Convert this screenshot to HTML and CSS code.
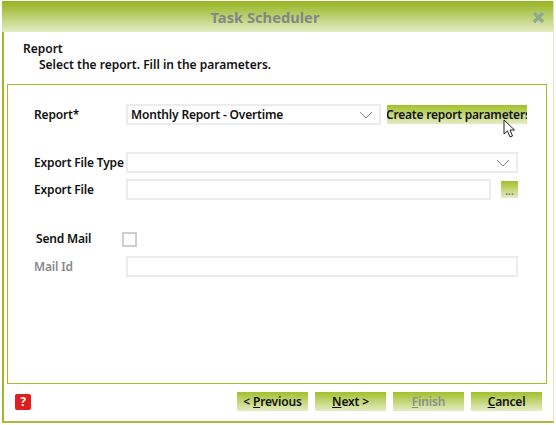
FILE: index.html
```html
<!DOCTYPE html>
<html lang="en">
<head>
  <meta charset="UTF-8">
  <title>Task Scheduler</title>
  <link rel="stylesheet" href="styles.css">
</head>
<body>

  <div class="window">
    <div class="titlebar">
      <span class="title">Task Scheduler</span>
      <svg class="close" width="15" height="15" viewBox="0 0 15 15">
        <path d="M3 3 L12 12 M12 3 L3 12" stroke="#8fa88f" stroke-width="3.2" fill="none"/>
      </svg>
    </div>

    <div class="head">
      <div class="head-title">Report</div>
      <div class="head-sub">Select the report. Fill in the parameters.</div>
    </div>

    <div class="panel">
      <div class="row row-report">
        <label class="label">Report*</label>
        <div class="field select select-report">
          <span>Monthly Report - Overtime</span>
          <svg class="chevron" width="14" height="8" viewBox="0 0 14 8"><path d="M1 1 L7 7 L13 1" stroke="#888" fill="none"/></svg>
        </div>
        <button class="btn btn-create">Create report parameters</button>
      </div>

      <div class="row row-type">
        <label class="label">Export File Type</label>
        <div class="field select select-wide">
          <span></span>
          <svg class="chevron" width="14" height="8" viewBox="0 0 14 8"><path d="M1 1 L7 7 L13 1" stroke="#888" fill="none"/></svg>
        </div>
      </div>

      <div class="row row-file">
        <label class="label">Export File</label>
        <div class="field field-file"></div>
        <button class="btn btn-dots">...</button>
      </div>

      <div class="row row-mail">
        <label class="label label-mail">Send Mail</label>
        <span class="checkbox"></span>
      </div>

      <div class="row row-id">
        <label class="label label-off">Mail Id</label>
        <div class="field select-wide"></div>
      </div>
    </div>

    <div class="footer">
      <span class="help">?</span>
      <div class="actions">
        <button class="btn btn-nav">&lt; <u>P</u>revious</button>
        <button class="btn btn-nav"><u>N</u>ext &gt;</button>
        <button class="btn btn-nav btn-off"><u>F</u>inish</button>
        <button class="btn btn-nav"><u>C</u>ancel</button>
      </div>
    </div>
  </div>

  <svg class="cursor" width="13" height="20" viewBox="0 0 13 20">
    <path d="M1 1 L1 15 L4.5 12 L7 18 L9.5 17 L7 11 L11.5 11 Z" fill="#fff" stroke="#222"/>
  </svg>

</body>
</html>
```

FILE: styles.css
```css
html, body {
  margin: 0;
  padding: 0;
  background: #fff;
}

body {
  width: 556px;
  height: 425px;
  overflow: hidden;
  position: relative;
  font-family: "Noto Sans", sans-serif;
  font-size: 12px;
  font-weight: 600;
  letter-spacing: -0.18px;
  color: #111;
}

.window {
  box-sizing: border-box;
  width: 552px;
  height: 422px;
  margin: 1px 0 0 2px;
  border-left: 2px solid #9ab82a;
  border-bottom: 2px solid #a4bd3c;
  border-right: 1px solid #dfe8bb;
  display: flex;
  flex-direction: column;
}

.titlebar {
  height: 31px;
  margin-left: -2px;
  padding-right: 25px;
  background: linear-gradient(#94b31d, #e4ecc4);
  display: flex;
  align-items: center;
  justify-content: center;
  position: relative;
  flex: none;
}

.title {
  color: #858585;
  font-size: 14.7px;
  font-weight: 700;
  letter-spacing: 0;
}

.close {
  position: absolute;
  right: 7px;
  top: 9px;
}

.head {
  height: 52px;
  flex: none;
  box-sizing: border-box;
  padding: 9px 0 0 19px;
  line-height: 16px;
  letter-spacing: 0;
}

.head-sub {
  padding-left: 16px;
}

.panel {
  box-sizing: border-box;
  height: 300px;
  width: 540px;
  margin-left: 3px;
  border: 1px solid #a4bf22;
  flex: none;
}

.row {
  display: flex;
  align-items: center;
  line-height: 16px;
}

.row-report {
  margin-top: 19px;
}

.row-type {
  margin-top: 27px;
}

.row-file {
  margin-top: 6px;
}

.row-mail {
  margin-top: 31px;
}

.row-id {
  margin-top: 9px;
}

.label {
  box-sizing: border-box;
  width: 118px;
  flex: none;
  padding-left: 26px;
  white-space: nowrap;
}

.label-mail {
  width: 114px;
  padding-left: 28px;
}

.label-off {
  color: #8a8a8a;
}

.field {
  box-sizing: border-box;
  height: 21px;
  border: 2px solid #ececec;
  background: #fff;
  flex: none;
}

.select {
  display: flex;
  align-items: center;
  justify-content: space-between;
  padding: 0 6px 0 3px;
}

.select-report {
  width: 255px;
}

.select-wide {
  width: 392px;
}

.field-file {
  width: 365px;
}

.chevron {
  flex: none;
}

.btn {
  box-sizing: border-box;
  border: none;
  padding: 0;
  background: linear-gradient(#a2bf2a, #e4ecc4);
  color: #111;
  font-family: inherit;
  font-size: 12px;
  font-weight: 600;
  letter-spacing: -0.18px;
  height: 19px;
  line-height: 19px;
  text-align: center;
  white-space: nowrap;
  overflow: hidden;
  flex: none;
}

.btn-create {
  width: 140px;
  margin-left: 6px;
  text-align: left;
  text-indent: -1px;
  letter-spacing: -0.22px;
}

.btn-dots {
  width: 17px;
  height: 17px;
  line-height: 19px;
  margin-left: 10px;
  color: #777;
  font-size: 11px;
}

.checkbox {
  box-sizing: border-box;
  width: 15px;
  height: 15px;
  border: 2px solid #cfcfcf;
  background: #fff;
}

.footer {
  flex: 1;
  display: flex;
  align-items: flex-start;
  justify-content: space-between;
  padding: 8px 11px 0 11px;
}

.help {
  width: 16px;
  height: 16px;
  margin-top: 2px;
  border-radius: 2px;
  background: #e31c1c;
  color: #fff;
  font-size: 12px;
  font-weight: 700;
  line-height: 16px;
  text-align: center;
}

.actions {
  display: flex;
  gap: 7px;
}

.btn-nav {
  width: 71px;
}

.btn-off {
  color: #8e8e8e;
}

.cursor {
  position: absolute;
  left: 503px;
  top: 119px;
}
```
